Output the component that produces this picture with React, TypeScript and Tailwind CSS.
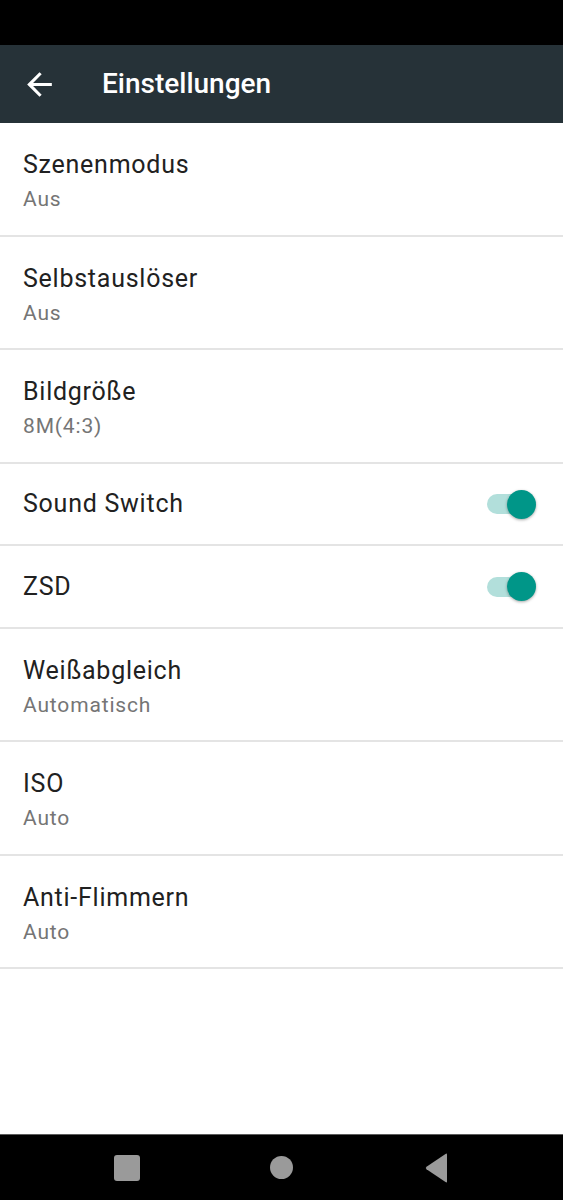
import React from 'react';

interface SettingRow {
  title: string;
  summary?: string;
  toggle?: boolean;
  height: string;
}

// row heights include the 2px divider
const rows: SettingRow[] = [
  { title: 'Szenenmodus', summary: 'Aus', height: 'h-[114px]' },
  { title: 'Selbstauslöser', summary: 'Aus', height: 'h-[113px]' },
  { title: 'Bildgröße', summary: '8M(4:3)', height: 'h-[114px]' },
  { title: 'Sound Switch', toggle: true, height: 'h-[82px]' },
  { title: 'ZSD', toggle: true, height: 'h-[83px]' },
  { title: 'Weißabgleich', summary: 'Automatisch', height: 'h-[113px]' },
  { title: 'ISO', summary: 'Auto', height: 'h-[114px]' },
  { title: 'Anti-Flimmern', summary: 'Auto', height: 'h-[113px]' },
];

const Toggle: React.FC = () => (
  <div className="relative w-[49px] h-[29px] flex items-center">
    <div className="w-[44px] h-[20px] rounded-full bg-[#b2dfdb]" />
    <div className="absolute right-0 top-0 w-[29px] h-[29px] rounded-full bg-[#009688] shadow-[0_1px_3px_rgba(0,0,0,0.35)]" />
  </div>
);

const App: React.FC = () => {
  return (
    <div className="w-[563px] h-[1200px] flex flex-col bg-white font-['Roboto',sans-serif] overflow-hidden">
      {/* status bar */}
      <div className="h-[45px] bg-black shrink-0" />

      {/* toolbar */}
      <div className="h-[78px] bg-[#263238] flex items-center shrink-0">
        <svg viewBox="0 0 24 24" className="w-[37px] h-[37px] ml-[21px]" fill="#ffffff">
          <path d="M20 11H7.83l5.59-5.59L12 4l-8 8 8 8 1.41-1.41L7.83 13H20v-2z" />
        </svg>
        <h1 className="ml-[44px] text-[28px] font-medium text-white leading-none">Einstellungen</h1>
      </div>

      {/* preferences */}
      <div className="flex-1">
        {rows.map((row) =>
          row.toggle ? (
            <div
              key={row.title}
              className={`${row.height} border-b-2 border-[#e4e4e4] flex items-center justify-between pl-[23px] pr-[27px]`}
            >
              <span className="text-[25px] leading-[30px] tracking-[0.03em] text-[#212121]">{row.title}</span>
              <Toggle />
            </div>
          ) : (
            <div
              key={row.title}
              className={`${row.height} border-b-2 border-[#e4e4e4] flex flex-col pl-[23px] pt-[27px]`}
            >
              <span className="text-[25px] leading-[30px] tracking-[0.03em] text-[#212121]">{row.title}</span>
              <span className="mt-[7px] text-[21px] leading-[24px] tracking-[0.04em] text-[#757575]">{row.summary}</span>
            </div>
          )
        )}
      </div>

      {/* navigation bar */}
      <div className="h-[66px] bg-black border-t border-[#5c5c5c] flex justify-center items-center shrink-0">
        <div className="w-[155px] flex justify-center">
          <div className="w-[26px] h-[26px] rounded-[3px] bg-[#9a9a9a]" />
        </div>
        <div className="w-[155px] flex justify-center">
          <div className="w-[23px] h-[23px] rounded-full bg-[#9a9a9a]" />
        </div>
        <div className="w-[155px] flex justify-center">
          <svg viewBox="0 0 24 30" className="w-[24px] h-[30px]">
            <path d="M22 1.5 L22 28.5 Q22 30 20.5 29 L1.5 16.2 Q0 15 1.5 13.8 L20.5 1 Q22 0 22 1.5 Z" fill="#9a9a9a" />
          </svg>
        </div>
      </div>
    </div>
  );
};

export default App;
